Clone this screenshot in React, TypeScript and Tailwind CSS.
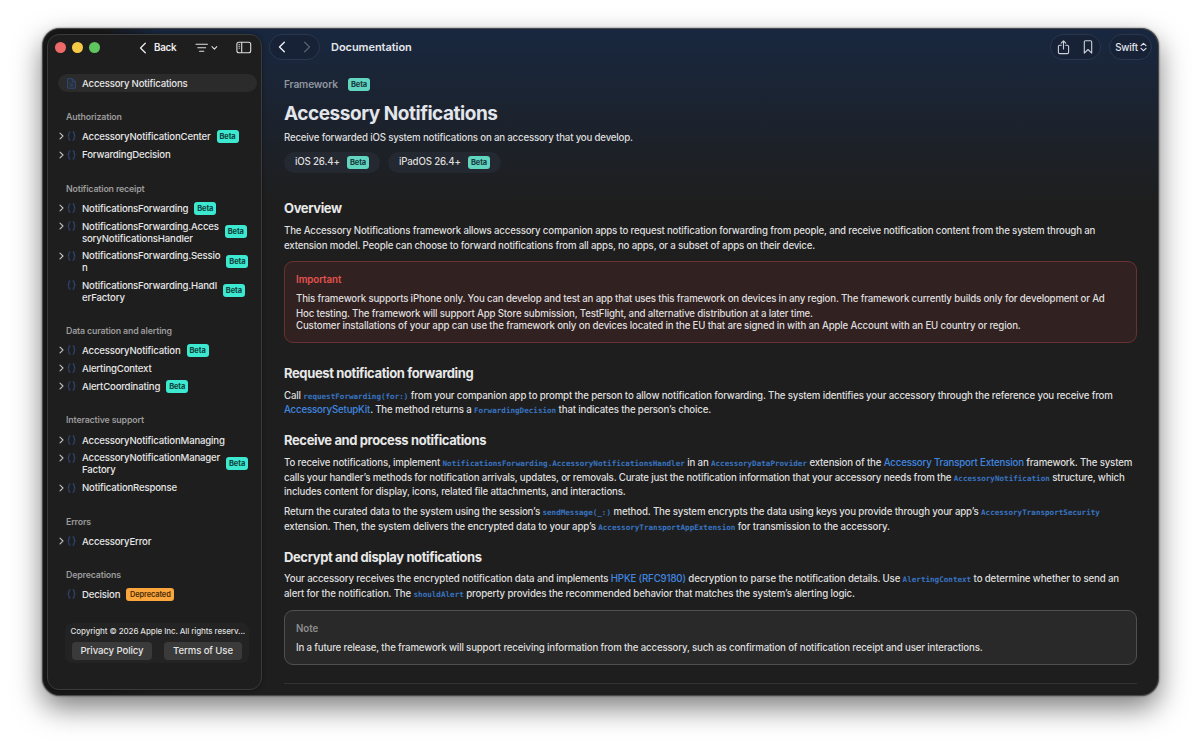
import type { ReactNode } from 'react'
import clsx from 'clsx'

interface Item {
  lines: string[]
  badge?: 'Beta' | 'Deprecated'
  leaf?: boolean
}

interface Section {
  title: string
  items: Item[]
}

const sections: Section[] = [
  {
    title: 'Authorization',
    items: [
      { lines: ['AccessoryNotificationCenter'], badge: 'Beta' },
      { lines: ['ForwardingDecision'] }
    ]
  },
  {
    title: 'Notification receipt',
    items: [
      { lines: ['NotificationsForwarding'], badge: 'Beta' },
      { lines: ['NotificationsForwarding.Acces', 'soryNotificationsHandler'], badge: 'Beta' },
      { lines: ['NotificationsForwarding.Sessio', 'n'], badge: 'Beta' },
      { lines: ['NotificationsForwarding.Handl', 'erFactory'], badge: 'Beta', leaf: true }
    ]
  },
  {
    title: 'Data curation and alerting',
    items: [
      { lines: ['AccessoryNotification'], badge: 'Beta' },
      { lines: ['AlertingContext'] },
      { lines: ['AlertCoordinating'], badge: 'Beta' }
    ]
  },
  {
    title: 'Interactive support',
    items: [
      { lines: ['AccessoryNotificationManaging'] },
      { lines: ['AccessoryNotificationManager', 'Factory'], badge: 'Beta' },
      { lines: ['NotificationResponse'] }
    ]
  },
  { title: 'Errors', items: [{ lines: ['AccessoryError'] }] },
  { title: 'Deprecations', items: [{ lines: ['Decision'], badge: 'Deprecated', leaf: true }] }
]

const Badge = ({ label, soft }: { label: string; soft?: boolean }) => (
  <span
    className={clsx(
      'flex h-[13px] shrink-0 items-center justify-center rounded-[3px] pt-[0.5px] text-[7.5px] leading-none',
      label === 'Beta' ? 'w-[22px] font-bold tracking-[-0.1px]' : 'w-12 font-semibold tracking-[-0.15px]',
      label === 'Beta' ? (soft ? 'bg-[#62d5c0] text-[#17383c]' : 'bg-[#3ce8d0] text-[#10423c]') : 'bg-[#fba63c] text-[#4a2c08]'
    )}
  >
    {label}
  </span>
)

const Braces = () => (
  <svg width="9" height="10" viewBox="0 0 9 10" fill="none" stroke="#304a7c" strokeWidth="1.1" className="shrink-0">
    <path d="M3.4.8C2.1.8 1.9 1.4 1.9 2.2v1.3C1.9 4.4 1.4 5 .4 5c1 0 1.5.6 1.5 1.5v1.3c0 .8.2 1.4 1.5 1.4M5.6.8c1.3 0 1.5.6 1.5 1.4v1.3C7.1 4.4 7.6 5 8.6 5c-1 0-1.5.6-1.5 1.5v1.3c0 .8-.2 1.4-1.5 1.4" />
  </svg>
)

const SidebarItem = ({ item }: { item: Item }) => {
  const double = item.lines.length > 1
  return (
    <div className={clsx('flex', double ? 'h-[29.5px]' : 'h-[18.2px]')}>
      <div className="flex h-[18.2px] w-6 shrink-0 items-center pl-px">
        <svg width="5" height="8" viewBox="0 0 5 8" fill="none" stroke="#c4c4c4" strokeWidth="1.1" strokeLinecap="round" strokeLinejoin="round" className={clsx('mr-[2.5px] shrink-0', item.leaf && 'invisible')}>
          <path d="M1 1.2 4 4 1 6.8" />
        </svg>
        <Braces />
      </div>
      <div className="flex items-center">
        <div className="pt-[1.6px] text-[9.6px] leading-[12px] font-medium tracking-[-0.17px] whitespace-nowrap text-[#e6e6e6]">
          {item.lines.map(line => (
            <div key={line}>{line}</div>
          ))}
        </div>
        {item.badge && (
          <div className="ml-[6px]">
            <Badge label={item.badge} />
          </div>
        )}
      </div>
    </div>
  )
}

const Sidebar = () => (
  <aside className="flex w-[215px] shrink-0 flex-col rounded-[12px] border border-[#3b3b3b] bg-[#1e1e1e] shadow-[0_0_4px_rgba(0,0,0,0.4)]">
    <div className="flex h-[25px] shrink-0 items-center pl-[7px]">
      <div className="flex gap-[6.5px]">
        <span className="size-[10.5px] rounded-full bg-[#ed6a69]" />
        <span className="size-[10.5px] rounded-full bg-[#f4c945]" />
        <span className="size-[10.5px] rounded-full bg-[#5fc55f]" />
      </div>
      <svg width="8" height="12" viewBox="0 0 8 12" fill="none" stroke="#ececec" strokeWidth="1.3" strokeLinecap="round" strokeLinejoin="round" className="ml-[39px]">
        <path d="M6.3 1.3 1.5 6l4.8 4.7" />
      </svg>
      <span className="ml-[7.5px] w-[23.5px] pt-[1.5px] text-[9.8px] font-semibold tracking-[-0.3px] text-[#ececec]">Back</span>
      <svg width="23" height="12" viewBox="0 0 23 12" fill="none" stroke="#e0e0e0" strokeWidth="1.1" strokeLinecap="round" strokeLinejoin="round" className="ml-[17px]">
        <path d="M1 2.3h11.4M2.8 5.8h7.8M4.6 9.3h4.2M17 4.7l2.4 2.4 2.4-2.4" />
      </svg>
      <svg width="16" height="13" viewBox="0 0 16 13" fill="none" stroke="#dedede" strokeWidth="1.1" className="ml-[18.5px]">
        <rect x="0.9" y="1.2" width="13.8" height="10.6" rx="2" />
        <path d="M5.7 1.2v10.6" />
        <path d="M2.5 3.6h1.6M2.5 5.4h1.6M2.5 7.2h1.6" strokeWidth="0.8" />
      </svg>
    </div>
    <div className="mt-[14px] mr-1 ml-[10px] flex h-[18px] shrink-0 items-center rounded-full bg-[#2b2b2b] pl-[9px]">
      <svg width="9" height="11" viewBox="0 0 9 11" fill="none" stroke="#304a7c" strokeWidth="1" strokeLinejoin="round">
        <path d="M.6.7h4.7l3 3v6.5H.6zM5.2.7v3.1h3.1M2.4 4.2h1.3M2.4 6.1h4M2.4 8h4" />
      </svg>
      <span className="ml-[6px] pt-[1.5px] text-[9.6px] font-medium tracking-[-0.19px] whitespace-nowrap text-[#e6e6e6]">Accessory Notifications</span>
    </div>
    <nav className="pl-[10px]">
      {sections.map(section => (
        <div key={section.title} className="pt-[18.9px]">
          <div className="mb-[4.4px] pl-[8px] text-[8.8px] leading-[12px] font-semibold tracking-[-0.15px] text-[#9a9a9a]">{section.title}</div>
          {section.items.map(item => (
            <SidebarItem key={item.lines[0]} item={item} />
          ))}
        </div>
      ))}
    </nav>
    <footer className="mt-[19px] ml-[17px] h-10 w-[184px] rounded-[7px] bg-[#232323] pt-[2px]">
      <p className="pl-[5.5px] text-[8px] leading-[13px] font-medium tracking-[-0.1px] whitespace-nowrap text-[#dedede]">Copyright © 2026 Apple Inc. All rights reserv...</p>
      <div className="mt-1 flex gap-3 pl-[7px] text-[9.6px] font-medium tracking-[-0.1px] whitespace-nowrap text-[#e4e4e4]">
        <button className="h-[18px] w-20 rounded-[4px] bg-[#3a3a3a] leading-none">Privacy Policy</button>
        <button className="h-[18px] w-[78px] rounded-[4px] bg-[#3a3a3a] leading-none">Terms of Use</button>
      </div>
    </footer>
  </aside>
)

const Toolbar = () => (
  <header className="flex h-[26px] items-center">
    <div className="flex h-[26px] w-[51px] items-center justify-between rounded-full border border-[#28374e] bg-[#172236] px-[8px]">
      <svg width="8" height="12" viewBox="0 0 8 12" fill="none" stroke="#eef0f4" strokeWidth="1.4" strokeLinecap="round" strokeLinejoin="round">
        <path d="M6.3 1.3 1.5 6l4.8 4.7" />
      </svg>
      <svg width="8" height="12" viewBox="0 0 8 12" fill="none" stroke="#566071" strokeWidth="1.3" strokeLinecap="round" strokeLinejoin="round">
        <path d="M1.7 1.3 6.5 6l-4.8 4.7" />
      </svg>
    </div>
    <h2 className="ml-[11px] text-[11px] font-semibold tracking-[-0.05px] text-[#e3e6ec]">Documentation</h2>
    <div className="ml-auto flex h-[26px] w-[51px] items-center justify-between rounded-full border border-[#28374e] bg-[#172236] pr-[7px] pl-[6px]">
      <svg width="13" height="15" viewBox="0 0 13 15" fill="none" stroke="#cdd2da" strokeWidth="1.1" strokeLinecap="round" strokeLinejoin="round">
        <path d="M4.3 5.2H2.8c-.9 0-1.4.5-1.4 1.4v5.6c0 .9.5 1.4 1.4 1.4h7.4c.9 0 1.4-.5 1.4-1.4V6.6c0-.9-.5-1.4-1.4-1.4H8.7M6.5 9V1M4.2 3.2 6.5.9l2.3 2.3" />
      </svg>
      <svg width="10" height="14" viewBox="0 0 10 14" fill="none" stroke="#cdd2da" strokeWidth="1.1" strokeLinejoin="round">
        <path d="M2.4.8h5.2c.7 0 1.1.4 1.1 1.1v11.2L5 9.5l-3.7 3.6V1.9c0-.7.4-1.1 1.1-1.1z" />
      </svg>
    </div>
    <button className="mr-[6px] ml-2 flex h-[26px] w-[43px] items-center rounded-full border border-[#28374e] bg-[#172236] pl-[5px] text-[9.8px] font-medium text-[#e3e6ec]">
      <span className="w-[23px] pt-[2px] tracking-[-0.2px]">Swift</span>
      <svg width="7" height="10" viewBox="0 0 7 10" fill="none" stroke="#e3e6ec" strokeWidth="1.1" strokeLinecap="round" strokeLinejoin="round" className="ml-[1.5px]">
        <path d="M1 3.7 3.5 1.3 6 3.7M1 6.3l2.5 2.4L6 6.3" />
      </svg>
    </button>
  </header>
)

const Code = ({ children }: { children: ReactNode }) => (
  <code className="font-['DejaVu_Sans_Mono',monospace] text-[7.6px] leading-none font-bold tracking-normal text-[#3874c2]">{children}</code>
)

const Link = ({ children }: { children: ReactNode }) => <a className="text-[#4087e0]">{children}</a>

const Line = ({ children }: { children: ReactNode }) => <span className="block h-[14.75px] whitespace-nowrap">{children}</span>

const Heading = ({ children, className }: { children: ReactNode; className: string }) => (
  <h3 className={clsx('text-[13px] leading-4 font-bold tracking-[-0.38px] text-[#e8e8e8]', className)}>{children}</h3>
)

const Article = () => (
  <article className="mr-[21px] ml-[15px] text-[9.7px] leading-[14.75px] font-[450] tracking-[-0.17px] text-[#dedede]">
    <div className="mt-[17px] flex h-[14px] items-center">
      <span className="w-[64px] text-[10.2px] font-semibold tracking-[-0.15px] text-[#8f959f]">Framework</span>
      <Badge label="Beta" soft />
    </div>
    <h1 className="mt-[11px] text-[19px] leading-6 font-bold tracking-[-0.46px] whitespace-nowrap text-[#e3e6eb]">Accessory Notifications</h1>
    <p className="mt-[5px] tracking-[-0.19px]">Receive forwarded iOS system notifications on an accessory that you develop.</p>
    <div className="mt-[6px] flex gap-2">
      <div className="flex h-[21px] w-24 items-center justify-between rounded-full bg-[#242831] px-[11px] font-medium">
        <span className="pt-px">iOS 26.4+</span>
        <Badge label="Beta" soft />
      </div>
      <div className="flex h-[21px] w-[113px] items-center justify-between rounded-full bg-[#242831] px-[11px] font-medium">
        <span className="pt-px">iPadOS 26.4+</span>
        <Badge label="Beta" soft />
      </div>
    </div>

    <Heading className="mt-[27.5px]">Overview</Heading>
    <p className="mt-[7.8px] tracking-[-0.187px]">
      <Line>The Accessory Notifications framework allows accessory companion apps to request notification forwarding from people, and receive notification content from the system through an</Line>
      <Line>extension model. People can choose to forward notifications from all apps, no apps, or a subset of apps on their device.</Line>
    </p>
    <div className="mt-[7.6px] h-[82px] w-[853px] rounded-[9px] border border-[#673231] bg-[#322121] pt-[11.2px] pl-[11px]">
      <p className="font-semibold tracking-[-0.05px] text-[#e5534f]">Important</p>
      <p className="mt-1 tracking-[-0.175px]">
        <Line>This framework supports iPhone only. You can develop and test an app that uses this framework on devices in any region. The framework currently builds only for development or Ad</Line>
        <Line>Hoc testing. The framework will support App Store submission, TestFlight, and alternative distribution at a later time.</Line>
      </p>
      <p className="-mt-[2.75px] tracking-[-0.16px] whitespace-nowrap">Customer installations of your app can use the framework only on devices located in the EU that are signed in with an Apple Account with an EU country or region.</p>
    </div>

    <Heading className="mt-[21.6px]">Request notification forwarding</Heading>
    <p className="mt-[7.8px]">
      <Line>Call <Code>requestForwarding(for:)</Code> from your companion app to prompt the person to allow notification forwarding. The system identifies your accessory through the reference you receive from</Line>
      <Line><Link>AccessorySetupKit</Link>. The method returns a <Code>ForwardingDecision</Code> that indicates the person’s choice.</Line>
    </p>

    <Heading className="mt-[14.4px]">Receive and process notifications</Heading>
    <p className="mt-[7.4px]">
      <Line>To receive notifications, implement <Code>NotificationsForwarding.AccessoryNotificationsHandler</Code> in an <Code>AccessoryDataProvider</Code> extension of the <Link>Accessory Transport Extension</Link> framework. The system</Line>
      <Line>calls your handler’s methods for notification arrivals, updates, or removals. Curate just the notification information that your accessory needs from the <Code>AccessoryNotification</Code> structure, which</Line>
      <Line>includes content for display, icons, related file attachments, and interactions.</Line>
    </p>
    <p className="mt-[5.3px] tracking-[-0.15px]">
      <Line>Return the curated data to the system using the session’s <Code>sendMessage(_:)</Code> method. The system encrypts the data using keys you provide through your app’s <Code>AccessoryTransportSecurity</Code></Line>
      <Line>extension. Then, the system delivers the encrypted data to your app’s <Code>AccessoryTransportAppExtension</Code> for transmission to the accessory.</Line>
    </p>

    <Heading className="mt-[14px]">Decrypt and display notifications</Heading>
    <p className="mt-[7.2px] tracking-[-0.155px]">
      <Line>Your accessory receives the encrypted notification data and implements <Link>HPKE (RFC9180)</Link> decryption to parse the notification details. Use <Code>AlertingContext</Code> to determine whether to send an</Line>
      <Line>alert for the notification. The <Code>shouldAlert</Code> property provides the recommended behavior that matches the system’s alerting logic.</Line>
    </p>
    <div className="mt-[8px] h-[55px] w-[853px] rounded-[9px] border border-[#505050] bg-[#292929] pt-[11px] pl-[11px]">
      <p className="font-semibold tracking-[-0.05px] text-[#8e8e8e]">Note</p>
      <p className="mt-[4.6px]">In a future release, the framework will support receiving information from the accessory, such as confirmation of notification receipt and user interactions.</p>
    </div>
    <hr className="mt-[18px] w-[853px] border-[#333333]" />
  </article>
)

export default function App() {
  return (
    <div className="h-[751px] w-[1200px] overflow-hidden bg-white pt-7 pl-[42px] font-['Inter',sans-serif] antialiased">
      <div className="h-[668px] w-[1117px] rounded-[18px] bg-[#4a4a4a] p-px shadow-[0_0_2px_rgba(0,0,0,0.6),0_12px_28px_rgba(0,0,0,0.5)]">
        <div className="h-full overflow-hidden rounded-[17px] bg-[#1e1e1e] bg-linear-to-b from-[#18273f] from-0% via-[#1c222c] via-[15%] to-[#1e1e1e] to-[26%]">
          <div className="flex h-full bg-linear-to-r from-[#181818] from-[60px] to-transparent to-[115px] pt-[5px] pb-[5px] pl-[4px]">
            <Sidebar />
            <main className="ml-[7px] min-w-0 flex-1">
              <Toolbar />
              <Article />
            </main>
          </div>
        </div>
      </div>
    </div>
  )
}
